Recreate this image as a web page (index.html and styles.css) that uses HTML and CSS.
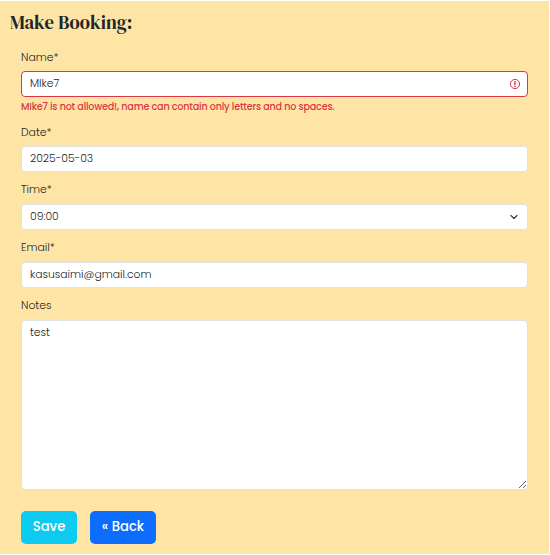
FILE: index.html
```html
<!DOCTYPE html>
<html lang="en">
<head>
<meta charset="utf-8">
<title>Make Booking</title>
<link rel="stylesheet" href="styles.css">
</head>
<body>
<main class="page">
  <h1 class="title"><span class="title-text">Make Booking:</span></h1>
  <form class="form" novalidate>
    <div class="field field-invalid">
      <label class="label" for="name">Name*</label>
      <div class="control control-invalid">
        <input class="input" id="name" type="text" value="MIke7">
        <svg class="alert-icon" viewBox="0 0 12 12" fill="none" stroke="#dc3545"><circle cx="6" cy="6" r="4.6"/><path d="M6 3.2v3.5" stroke-width="1.5"/><circle cx="6" cy="8.3" r=".85" fill="#dc3545" stroke="none"/></svg>
      </div>
      <p class="error">MIke7 is not allowed!, name can contain only letters and no spaces.</p>
    </div>
    <div class="field field-date">
      <label class="label" for="date">Date*</label>
      <div class="control"><input class="input" id="date" type="text" value="2025-05-03"></div>
    </div>
    <div class="field">
      <label class="label" for="time">Time*</label>
      <div class="control">
        <select class="input select" id="time"><option>09:00</option></select>
        <svg class="chevron" viewBox="0 0 16 16" fill="none" stroke="#343a40" stroke-width="2.3" stroke-linecap="round" stroke-linejoin="round"><path d="m2 5 6 6 6-6"/></svg>
      </div>
    </div>
    <div class="field">
      <label class="label" for="email">Email*</label>
      <div class="control"><input class="input" id="email" type="email" value="kasusaimi@gmail.com"></div>
    </div>
    <div class="field">
      <label class="label" for="notes">Notes</label>
      <textarea class="notes" id="notes" spellcheck="false">test</textarea>
    </div>
    <div class="actions">
      <button class="button button-save" type="button">Save</button>
      <button class="button button-back" type="button">« Back</button>
    </div>
  </form>
</main>
</body>
</html>
```

FILE: styles.css
```css
* { box-sizing: border-box; }
body { margin: 0; background: #fff; color: #212529; font-family: Poppins, Inter, sans-serif; font-size: 10.8px; font-weight: 300; }
.page { width: 549px; height: 553px; margin-top: 1px; background: #ffe5a5; display: flow-root; }
.title { margin: 7px 0 0 10px; height: 42px; font: 500 20px/28px "DM Serif Display", "Liberation Serif", serif; }
.title-text { display: inline-block; transform: scaleX(.935); transform-origin: left; }
.form { margin: 0 21px; }
.field { margin-bottom: 10px; }
.field-invalid { margin-bottom: 11px; }
.label { display: block; height: 14px; line-height: 16px; margin-bottom: 8px; width: max-content; }
.field-invalid .label, .field-date .label { margin-bottom: 7px; }
.control { display: flex; align-items: center; height: 26px; padding: 0 7px 0 8px; border: 1px solid #dee2e6; border-radius: 4px; background: #fff; }
.control-invalid { border-color: #dc3545; }
.input { flex: 1; min-width: 0; height: 24px; padding: 0; border: 0; outline: 0; background: transparent; color: #212529; font: inherit; appearance: none; }
.select { padding-bottom: 2px; }
.alert-icon { width: 12px; height: 12px; margin-right: -1px; }
.chevron { width: 8px; height: 8px; margin-right: 2px; }
.error { margin: 3px 0 0; height: 14px; font-size: 9.6px; line-height: 14px; font-weight: 500; letter-spacing: -.18px; color: #dc3545; white-space: nowrap; }
.notes { display: block; width: 100%; height: 170px; padding: 4px 8px; border: 1px solid #dee2e6; border-radius: 4px; outline: 0; resize: both; color: #212529; background: #fff; font: inherit; line-height: 16px; }
.actions { display: flex; gap: 13px; margin-top: 21px; }
.button { height: 33px; padding: 0 0 1px; border: 0; border-radius: 5px; color: #fff; font: 500 13.2px/32px Poppins, Inter, sans-serif; }
.button-save { width: 56px; background: #0dcaf0; }
.button-back { width: 66px; background: #0d6efd; }
```
